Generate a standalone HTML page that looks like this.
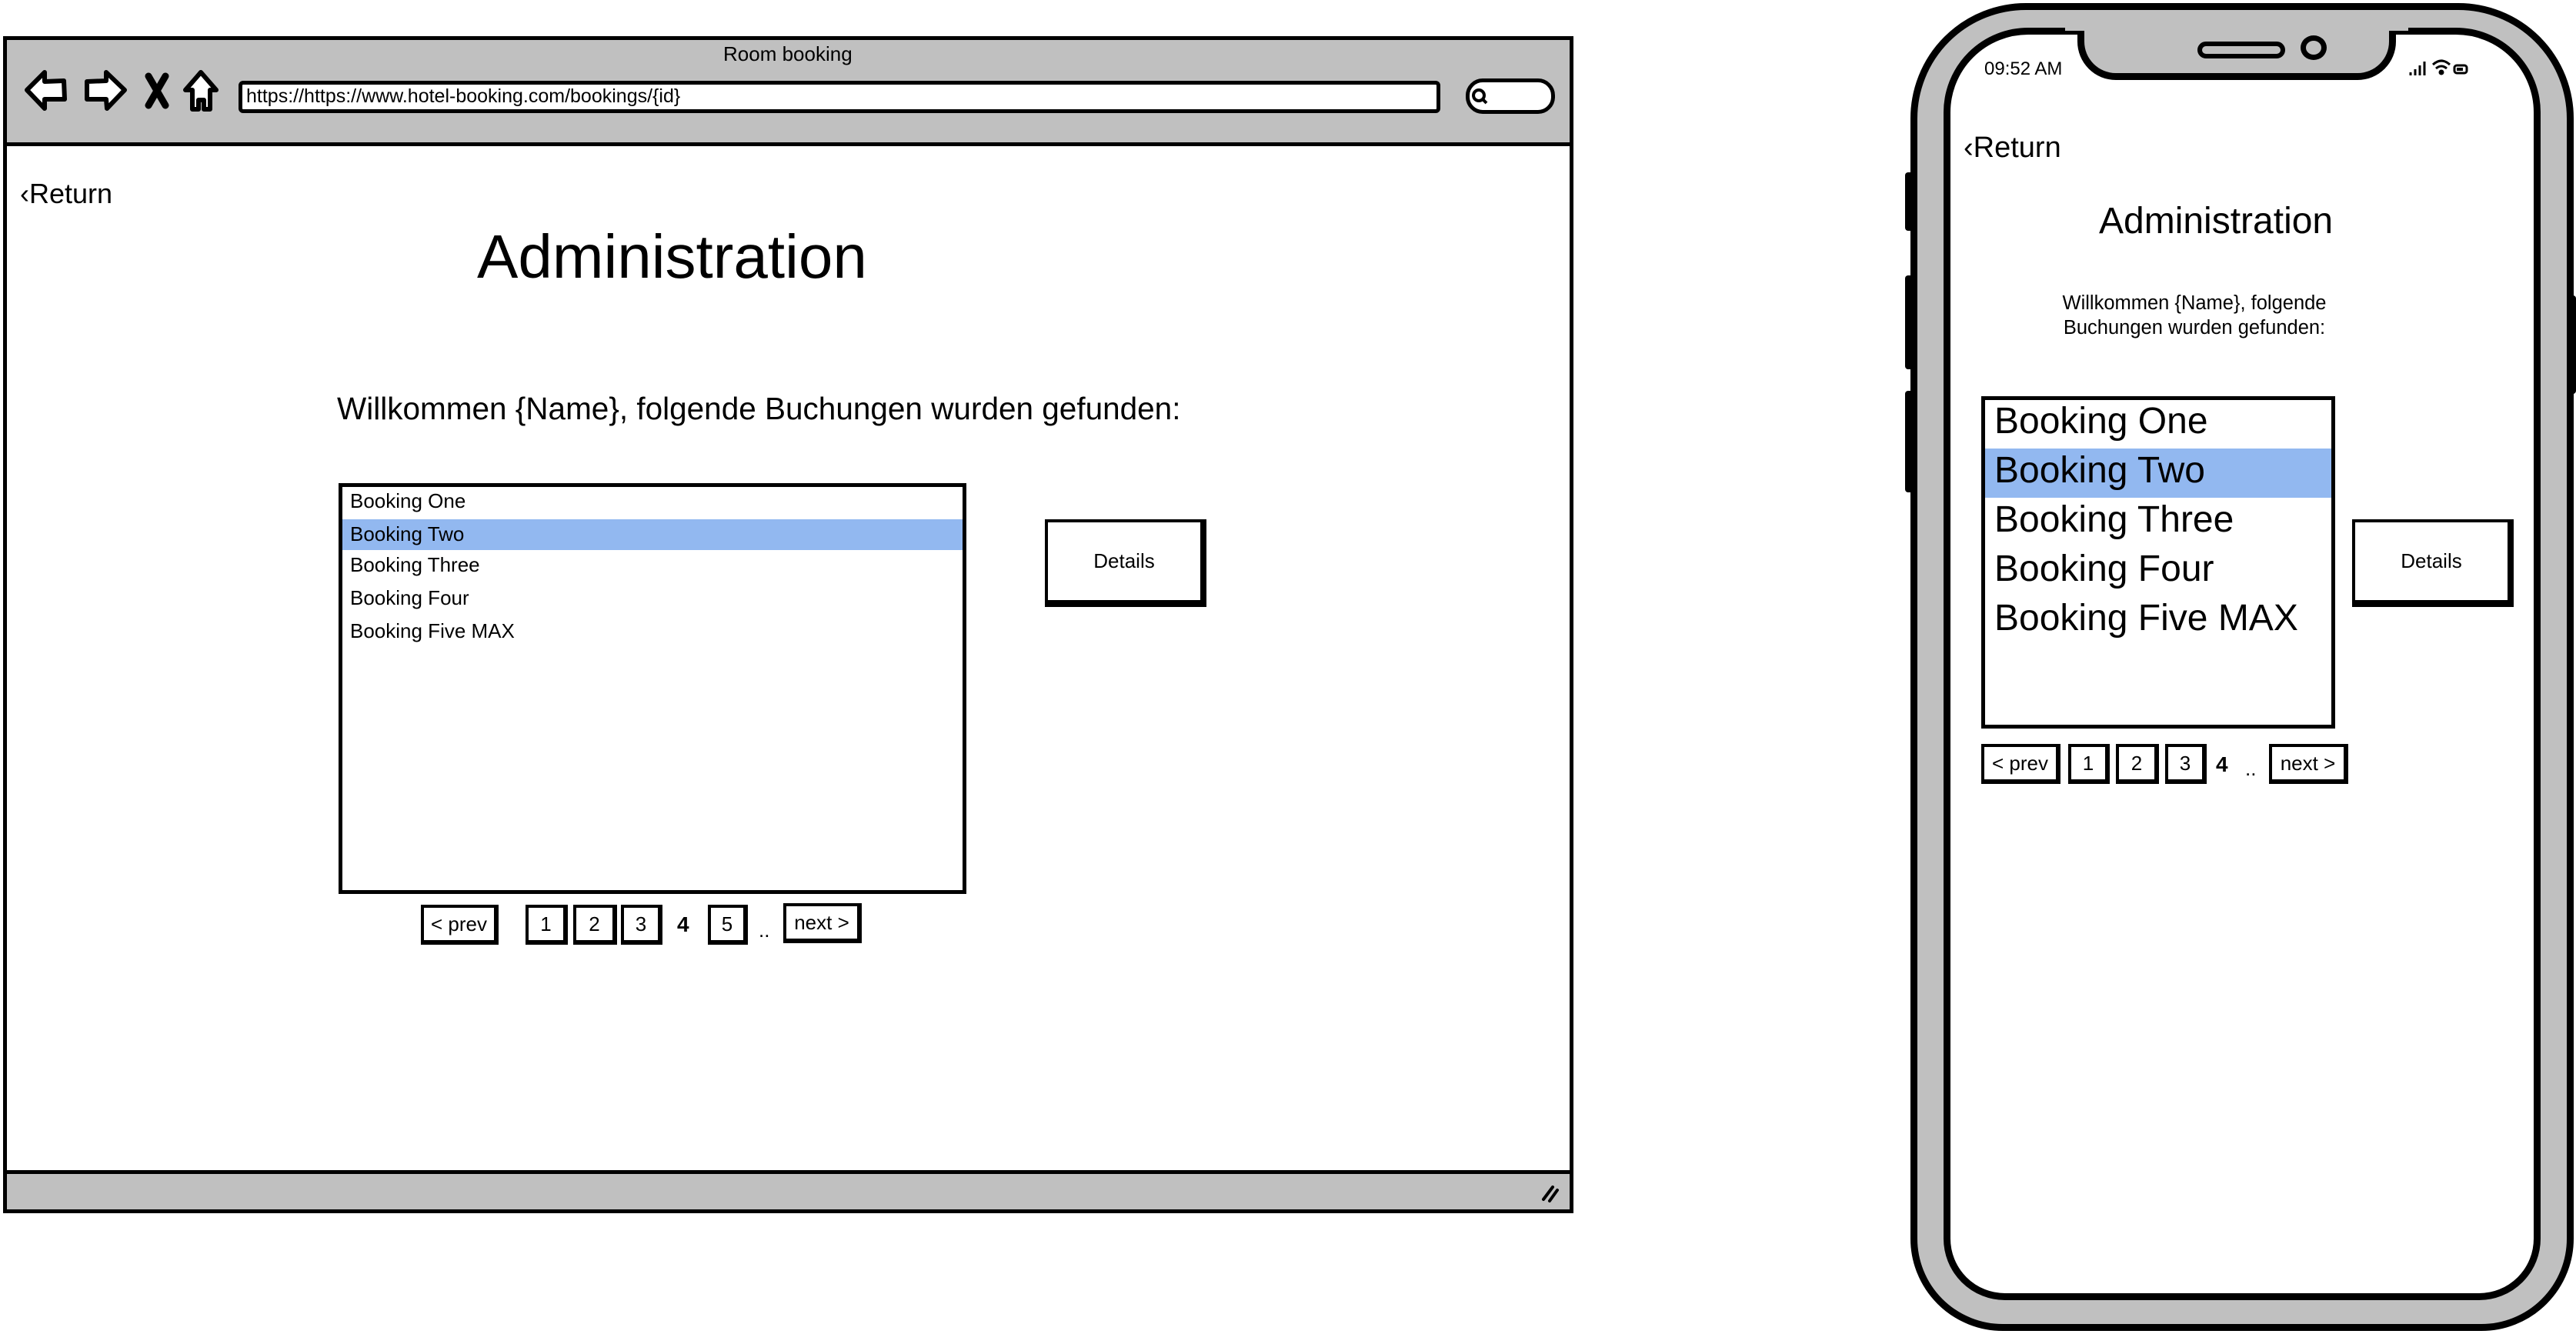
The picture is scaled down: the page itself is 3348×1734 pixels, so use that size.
<!DOCTYPE html>
<html><head><meta charset="utf-8"><style>
*{margin:0;padding:0;box-sizing:border-box}
body{width:3348px;height:1734px;background:#fff;position:relative;overflow:hidden;font-family:"Liberation Sans",sans-serif;color:#000}
.a{position:absolute}
.t{position:absolute;white-space:nowrap;line-height:1}
.box{position:absolute;border:5px solid #000;background:#fff}
.pg{position:absolute;border:4px solid #000;border-right-width:6px;border-bottom-width:6px;background:#fff;display:flex;align-items:center;justify-content:center;font-size:26px}
</style></head><body>

<!-- Browser window -->
<div class="a" style="left:4px;top:47px;width:2041px;height:1530px;border:5px solid #000;background:#fff"></div>
<div class="a" style="left:4px;top:47px;width:2041px;height:143px;border:5px solid #000;background:#c0c0c0"></div>
<div class="a" style="left:4px;top:1521px;width:2041px;height:56px;border:5px solid #000;background:#c0c0c0"></div>
<div class="t" style="left:940px;top:57px;font-size:26px">Room booking</div>
<svg class="a" style="left:25px;top:85px" width="270" height="65" viewBox="0 0 270 65">
<g fill="#fff" stroke="#000" stroke-width="6" stroke-linejoin="round">
<path d="M10 32 L33 9 L33 21 L58 20 L59 44 L33 44 L33 56 Z"/>
<path d="M137 32 L113 9 L113 20 L88 21 L88 44 L113 44 L114 56 Z"/>
<path d="M236 9 L256 32 L248 32 L248 57 L240 57 L240 45 L233 45 L233 57 L225 57 L225 32 L216 32 Z"/>
</g>
<path d="M168 14 L190 52 M190 14 L168 52" stroke="#000" stroke-width="9" stroke-linecap="round"/>
</svg>
<div class="a" style="left:310px;top:105px;width:1562px;height:42px;border:5px solid #000;border-radius:6px;background:#fff"></div>
<div class="t" style="left:320px;top:113px;font-size:25px">https://https://www.hotel-booking.com/bookings/{id}</div>
<div class="a" style="left:1905px;top:102px;width:116px;height:46px;border:5px solid #000;border-radius:22px;background:#fff"></div>
<svg class="a" style="left:1910px;top:112px" width="30" height="28"><circle cx="12" cy="12" r="7" fill="none" stroke="#000" stroke-width="4"/><path d="M16 16 L22 22" stroke="#000" stroke-width="4"/></svg>
<svg class="a" style="left:1998px;top:1535px" width="30" height="30"><path d="M8 24 L20 8 M16 26 L26 12" stroke="#000" stroke-width="4" stroke-linecap="round"/></svg>

<div class="t" style="left:26px;top:234px;font-size:36px">&lsaquo;Return</div>
<div class="t" style="left:620px;top:294px;font-size:80px">Administration</div>
<div class="t" style="left:438px;top:511px;font-size:40.5px">Willkommen {Name}, folgende Buchungen wurden gefunden:</div>

<div class="box" style="left:440px;top:628px;width:816px;height:534px"></div>
<div class="a" style="left:445px;top:675px;width:806px;height:40px;background:#92b8f0"></div>
<div class="t" style="left:455px;top:638px;font-size:26px">Booking One</div>
<div class="t" style="left:455px;top:681px;font-size:26px">Booking Two</div>
<div class="t" style="left:455px;top:721px;font-size:26px">Booking Three</div>
<div class="t" style="left:455px;top:764px;font-size:26px">Booking Four</div>
<div class="t" style="left:455px;top:807px;font-size:26px">Booking Five MAX</div>

<div class="a" style="left:1358px;top:675px;width:210px;height:114px;border:4px solid #000;border-right-width:8px;border-bottom-width:9px;background:#fff;display:flex;align-items:center;justify-content:center;font-size:26px">Details</div>

<div class="pg" style="left:547px;top:1176px;width:101px;height:52px">&lt; prev</div>
<div class="pg" style="left:683px;top:1176px;width:55px;height:52px">1</div>
<div class="pg" style="left:745px;top:1176px;width:57px;height:52px">2</div>
<div class="pg" style="left:807px;top:1176px;width:54px;height:52px">3</div>
<div class="t" style="left:880px;top:1188px;font-size:28px;font-weight:bold">4</div>
<div class="pg" style="left:920px;top:1176px;width:52px;height:52px">5</div>
<div class="t" style="left:986px;top:1196px;font-size:26px">..</div>
<div class="pg" style="left:1018px;top:1174px;width:102px;height:52px">next &gt;</div>

<!-- Phone -->
<div class="a" style="left:2476px;top:224px;width:14px;height:76px;background:#000;border-radius:4px"></div>
<div class="a" style="left:2476px;top:358px;width:14px;height:122px;background:#000;border-radius:4px"></div>
<div class="a" style="left:2476px;top:508px;width:14px;height:132px;background:#000;border-radius:4px"></div>
<div class="a" style="left:3336px;top:384px;width:12px;height:128px;background:#000;border-radius:4px"></div>
<div class="a" style="left:2483px;top:4px;width:862px;height:1726px;border:9px solid #000;border-radius:150px 150px 120px 120px;background:#c0c0c0"></div>
<div class="a" style="left:2526px;top:36px;width:776px;height:1654px;border:9px solid #000;border-radius:110px 110px 80px 80px;background:#fff"></div>
<!-- notch -->
<div class="a" style="left:2700px;top:20px;width:414px;height:84px;background:#c0c0c0;border:9px solid #000;border-top:none;border-radius:0 0 50px 50px"></div>
<div class="a" style="left:2700px;top:20px;width:414px;height:20px;background:#c0c0c0"></div>
<div class="a" style="left:2684px;top:26px;width:24px;height:14px;background:#c0c0c0"></div>
<div class="a" style="left:3106px;top:26px;width:24px;height:14px;background:#c0c0c0"></div>
<div class="a" style="left:2856px;top:54px;width:114px;height:22px;border:6px solid #000;border-radius:11px;background:#c0c0c0"></div>
<div class="a" style="left:2990px;top:46px;width:34px;height:32px;border:7px solid #000;border-radius:50%;background:#c0c0c0"></div>
<div class="t" style="left:2579px;top:78px;font-size:24px">09:52 AM</div>
<svg class="a" style="left:3130px;top:72px" width="80" height="30"><g stroke="#000" stroke-width="3"><path d="M3 26V22M9 26V18M15 26V13M21 26V8"/><path d="M32 12 Q43 2 54 12 M36 17 Q43 11 50 17" fill="none"/><circle cx="43" cy="22" r="2" fill="#000"/><rect x="60" y="13" width="16" height="10" rx="3" fill="none"/><rect x="63" y="16" width="8" height="4" fill="#000" stroke="none"/></g></svg>

<div class="t" style="left:2552px;top:173px;font-size:38px">&lsaquo;Return</div>
<div class="t" style="left:2728px;top:264px;font-size:48px">Administration</div>
<div class="t" style="left:2852px;top:378px;font-size:25.5px;transform:translateX(-50%);text-align:center;line-height:32px">Willkommen {Name}, folgende<br>Buchungen wurden gefunden:</div>

<div class="box" style="left:2575px;top:515px;width:460px;height:432px"></div>
<div class="a" style="left:2580px;top:583px;width:450px;height:64px;background:#92b8f0"></div>
<div class="t" style="left:2592px;top:524px;font-size:48px">Booking One</div>
<div class="t" style="left:2592px;top:588px;font-size:48px">Booking Two</div>
<div class="t" style="left:2592px;top:652px;font-size:48px">Booking Three</div>
<div class="t" style="left:2592px;top:716px;font-size:48px">Booking Four</div>
<div class="t" style="left:2592px;top:780px;font-size:48px">Booking Five MAX</div>

<div class="a" style="left:3057px;top:675px;width:210px;height:114px;border:4px solid #000;border-right-width:8px;border-bottom-width:9px;background:#fff;display:flex;align-items:center;justify-content:center;font-size:26px">Details</div>

<div class="pg" style="left:2575px;top:967px;width:103px;height:52px">&lt; prev</div>
<div class="pg" style="left:2688px;top:967px;width:54px;height:52px">1</div>
<div class="pg" style="left:2750px;top:967px;width:56px;height:52px">2</div>
<div class="pg" style="left:2814px;top:967px;width:54px;height:52px">3</div>
<div class="t" style="left:2880px;top:980px;font-size:28px;font-weight:bold">4</div>
<div class="t" style="left:2918px;top:986px;font-size:26px">..</div>
<div class="pg" style="left:2949px;top:967px;width:103px;height:52px">next &gt;</div>

</body></html>
